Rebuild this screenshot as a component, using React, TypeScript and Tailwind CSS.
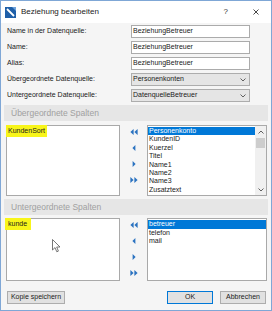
import React from 'react';

const upperItems = ['Personenkonto', 'KundenID', 'Kuerzel', 'Titel', 'Name1', 'Name2', 'Name3', 'Zusatztext'];
const lowerItems = ['betreuer', 'telefon', 'mail'];

const ArrowIcon = ({ kind }: { kind: 'll' | 'l' | 'r' | 'rr' }) => {
  const paths: Record<string, string[]> = {
    ll: ['M3.6 0 L0.4 3 L3.6 6 Z', 'M7.6 0 L4.4 3 L7.6 6 Z'],
    l: ['M5.4 0 L2.4 3 L5.4 6 Z'],
    r: ['M2.6 0 L5.6 3 L2.6 6 Z'],
    rr: ['M0.4 0 L3.6 3 L0.4 6 Z', 'M4.4 0 L7.6 3 L4.4 6 Z'],
  };
  return (
    <svg width="8" height="6" viewBox="0 0 8 6">
      {paths[kind].map((d) => (
        <path key={d} d={d} fill="#2a72c0" />
      ))}
    </svg>
  );
};

const Arrows = () => (
  <div className="w-[27px] flex flex-col items-center pt-[4px] gap-[10px]">
    <ArrowIcon kind="ll" />
    <ArrowIcon kind="l" />
    <ArrowIcon kind="r" />
    <ArrowIcon kind="rr" />
  </div>
);

const Chevron = ({ up }: { up?: boolean }) => (
  <svg width="6" height="4" viewBox="0 0 6 4">
    <path d={up ? 'M0.5 3.5 L3 1 L5.5 3.5' : 'M0.5 0.5 L3 3 L5.5 0.5'} stroke="#606060" strokeWidth="1" fill="none" />
  </svg>
);

const FormRow = ({ label, value, select }: { label: string; value: string; select?: boolean }) => (
  <div className="h-[13px] flex items-center">
    <div className="w-[126px] pl-[2px]">{label}</div>
    {select ? (
      <div className="w-[119px] h-[13px] border border-[#adadad] bg-[#e5e5e5] flex items-center justify-between pl-[1px] pr-[3px]">
        <span>{value}</span>
        <Chevron />
      </div>
    ) : (
      <div className="w-[119px] h-[13px] border border-[#ababab] bg-white flex items-center pl-[1px]">{value}</div>
    )}
  </div>
);

const SectionBand = ({ title }: { title: string }) => (
  <div className="h-[16px] -mx-[1px] bg-[#e6e6e6] flex items-center pl-[7px] text-[8.5px] text-[#a0a0a0]">{title}</div>
);

const Button = ({ label, primary, className }: { label: string; primary?: boolean; className?: string }) => (
  <div
    className={`h-[13px] flex items-center justify-center bg-[#e1e1e1] border ${primary ? 'border-[#0078d7]' : 'border-[#adadad]'} ${className ?? ''}`}
  >
    {label}
  </div>
);

export default function App() {
  return (
    <div className="w-[272px] h-[311px] box-border border border-[#7fa7d6] bg-[#f5f5f5] flex flex-col overflow-hidden font-['Liberation_Sans',Arial,sans-serif] text-[7px] leading-[8.4px] text-[#1a1a1a]">
      {/* Title bar */}
      <div className="h-[22px] bg-white flex items-center pl-[4px] shrink-0">
        <svg width="11" height="11" viewBox="0 0 11 11">
          <rect x="0" y="0" width="11" height="11" fill="#1f5fa8" />
          <path d="M7 0 L11 0 L11 4 Z" fill="#6fa3dc" />
          <path d="M2 2 L9 9" stroke="#ffffff" strokeWidth="1.8" />
        </svg>
        <span className="ml-[5px] text-[8px] text-[#222]">Beziehung bearbeiten</span>
        <span className="ml-auto text-[8px] text-[#333]">?</span>
        <svg className="ml-[25px] mr-[12px]" width="6" height="6" viewBox="0 0 6 6">
          <path d="M0.5 0.5 L5.5 5.5 M5.5 0.5 L0.5 5.5" stroke="#333" strokeWidth="0.9" />
        </svg>
      </div>

      {/* Body */}
      <div className="flex-1 flex flex-col px-[4px] pt-[2px]">
        <div className="flex flex-col gap-[3px]">
          <FormRow label="Name in der Datenquelle:" value="BeziehungBetreuer" />
          <FormRow label="Name:" value="BeziehungBetreuer" />
          <FormRow label="Alias:" value="BeziehungBetreuer" />
          <FormRow label="Übergeordnete Datenquelle:" value="Personenkonten" select />
          <FormRow label="Untergeordnete Datenquelle:" value="DatenquelleBetreuer" select />
        </div>

        <div className="mt-[3px]">
          <SectionBand title="Übergeordnete Spalten" />
        </div>

        {/* Upper lists */}
        <div className="mt-[4px] h-[71px] flex">
          <div className="ml-[1px] w-[114px] border border-[#a9a9a9] bg-white relative">
            <span className="absolute -left-[1px] -top-[1px] h-[12px] px-[2px] pt-[1.5px] bg-[#f8f51a]">KundenSort</span>
          </div>
          <Arrows />
          <div className="w-[120px] border border-[#a9a9a9] bg-white flex">
            <div className="flex-1 pt-[1px]">
              {upperItems.map((item, i) => (
                <div
                  key={item}
                  className={`h-[8.4px] pl-[1px] ${i === 0 ? 'bg-[#0078d7] text-white' : ''}`}
                >
                  {item}
                </div>
              ))}
            </div>
            <div className="w-[11px] bg-[#f0f0f0] flex flex-col items-center">
              <div className="h-[11px] flex items-center">
                <Chevron up />
              </div>
              <div className="w-[9px] h-[10px] bg-[#cdcdcd] mt-[1px]" />
              <div className="flex-1" />
              <div className="h-[11px] flex items-center">
                <Chevron />
              </div>
            </div>
          </div>
        </div>

        <div className="mt-[3px]">
          <SectionBand title="Untergeordnete Spalten" />
        </div>

        {/* Lower lists */}
        <div className="mt-[3px] h-[63px] flex">
          <div className="ml-[1px] w-[114px] border border-[#a9a9a9] bg-white relative">
            <span className="absolute -left-[2px] -top-[1px] h-[12px] pl-[3px] pr-[4px] pt-[2px] bg-[#f8f51a]">kunde</span>
            <svg className="absolute left-[45px] top-[20px]" width="9" height="14" viewBox="0 0 9 14">
              <path d="M0.5 0.5 L0.5 11 L3 8.6 L4.8 12.8 L6.4 12.1 L4.7 8 L8 8 Z" fill="#ffffff" stroke="#555" strokeWidth="0.8" />
            </svg>
          </div>
          <Arrows />
          <div className="w-[120px] border border-[#a9a9a9] bg-white pt-[1px]">
            {lowerItems.map((item, i) => (
              <div
                key={item}
                className={`h-[8.5px] pl-[1px] ${i === 0 ? 'bg-[#0078d7] text-white' : ''}`}
              >
                {item}
              </div>
            ))}
          </div>
        </div>

        {/* Buttons */}
        <div className="mt-[10px] flex">
          <Button label="Kopie speichern" className="ml-[2px] w-[58px]" />
          <Button label="OK" primary className="ml-auto w-[46px]" />
          <Button label="Abbrechen" className="ml-[7px] mr-[1px] w-[46px]" />
        </div>
      </div>
    </div>
  );
}
